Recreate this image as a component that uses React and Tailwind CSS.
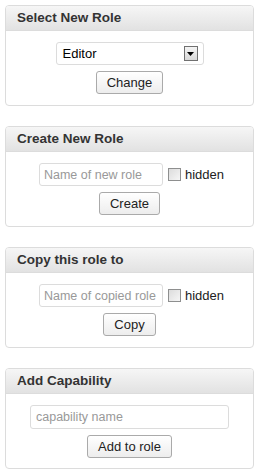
export default function App() {
  return (
    <div className="flex w-[262px] flex-col gap-[20px] bg-white px-[5px] pt-[5px] font-['Liberation_Sans',Arial,sans-serif] text-[13px] text-[#222]">
      <Panel title="Select New Role">
        <div className="flex h-[23px] w-[148px] items-center justify-between rounded-[3px] border border-[#dcdcdc] bg-white pl-[6px] pr-[5px]">
          <span className="text-black">Editor</span>
          <span className="flex h-[15px] w-[14px] items-center justify-center border border-[#707070] bg-gradient-to-b from-[#f4f4f4] to-[#d8d8d8]">
            <svg width="7" height="4" viewBox="0 0 7 4">
              <path d="M0 0h7L3.5 4z" fill="#000" />
            </svg>
          </span>
        </div>
        <Button>Change</Button>
      </Panel>

      <Panel title="Create New Role">
        <NameRow placeholder="Name of new role" />
        <Button>Create</Button>
      </Panel>

      <Panel title="Copy this role to">
        <NameRow placeholder="Name of copied role" />
        <Button>Copy</Button>
      </Panel>

      <Panel title="Add Capability">
        <input
          placeholder="capability name"
          className="h-[24px] w-[199px] rounded-[3px] border border-[#dcdcdc] px-[5px] text-[12.5px] placeholder:text-[#999] focus:outline-none"
        />
        <Button>Add to role</Button>
      </Panel>
    </div>
  );
}

function Panel({ title, children }) {
  return (
    <div className="h-[101px] w-[249px] overflow-hidden rounded-[4px] border border-[#dcdcdc]">
      <div className="flex h-[25px] items-center border-b border-[#dcdcdc] bg-gradient-to-b from-[#f6f6f6] to-[#e2e2e2] px-[11px] text-[13.5px] font-bold text-[#333]">
        {title}
      </div>
      <div className="flex flex-col items-center gap-[6px] pt-[11px]">{children}</div>
    </div>
  );
}

function NameRow({ placeholder }) {
  return (
    <div className="flex items-center gap-[5px] pl-[4px]">
      <input
        placeholder={placeholder}
        className="h-[23px] w-[124px] rounded-[3px] border border-[#dcdcdc] px-[4px] text-[12.5px] placeholder:text-[#999] focus:outline-none"
      />
      <label className="flex items-center gap-[4px] text-[13px] text-[#222]">
        <span className="h-[13px] w-[13px] border border-[#8e8f8f] bg-gradient-to-br from-[#dcdcdc] to-[#f6f6f6]" />
        hidden
      </label>
    </div>
  );
}

function Button({ children }) {
  return (
    <button className="h-[23px] rounded-[3px] border border-[#aaa] bg-gradient-to-b from-white to-[#ededed] px-[10px] text-[13px] text-[#222]">
      {children}
    </button>
  );
}
